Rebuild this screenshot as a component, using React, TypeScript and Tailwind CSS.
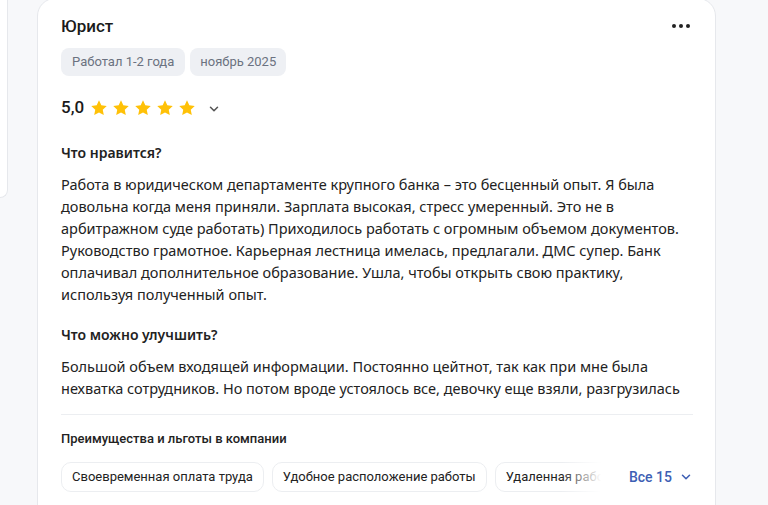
import React from "react";

const Star = () => (
  <svg width="18" height="18" viewBox="0 0 24 24" className="shrink-0">
    <path
      d="M12 1.8l3.1 6.6 7.2.9-5.3 5 1.4 7.1L12 17.9l-6.4 3.5 1.4-7.1-5.3-5 7.2-.9z"
      fill="#ffc107"
    />
  </svg>
);

const Chevron = ({ color = "#555", size = 14 }: { color?: string; size?: number }) => (
  <svg width={size} height={size} viewBox="0 0 24 24" fill="none">
    <path d="M6 9l6 6 6-6" stroke={color} strokeWidth="2.6" strokeLinecap="round" strokeLinejoin="round" />
  </svg>
);

export default function App() {
  const body = "font-['Noto_Sans','Open_Sans',sans-serif] text-[14.5px] leading-[22px] text-[#222]";
  const chip = "shrink-0 h-[30px] px-[10px] flex items-center rounded-[10px] border border-[#eceef1] text-[13px] text-[#222] whitespace-nowrap";
  return (
    <div className="w-[768px] h-[505px] overflow-hidden bg-[#f7f8fa] flex font-['Roboto',sans-serif]">
      <div className="w-[8px] h-[198px] bg-white border-r border-b border-[#e6e8ec] rounded-br-[14px] shrink-0" />
      <div className="ml-[29px] w-[679px] h-[530px] -mt-[2px] bg-white border border-[#e6e8ec] rounded-[18px] pl-[23px] pr-[22px] pt-[15px] flex flex-col">
        <div className="flex items-center justify-between">
          <div className="text-[17px] leading-[24px] font-medium text-[#1a1a1a]">Юрист</div>
          <div className="flex gap-[3px] mr-[3px]">
            <span className="w-[4px] h-[4px] rounded-full bg-[#222]" />
            <span className="w-[4px] h-[4px] rounded-full bg-[#222]" />
            <span className="w-[4px] h-[4px] rounded-full bg-[#222]" />
          </div>
        </div>
        <div className="flex gap-[5px] mt-[10px]">
          <span className="h-[28px] px-[11px] flex items-center rounded-[8px] bg-[#eef0f4] text-[13px] text-[#6b7280]">Работал 1-2 года</span>
          <span className="h-[28px] px-[10px] flex items-center rounded-[8px] bg-[#eef0f4] text-[13px] text-[#6b7280]">ноябрь 2025</span>
        </div>
        <div className="flex items-center mt-[20px] h-[24px]">
          <span className="text-[17px] font-medium text-[#1a1a1a] mr-[6px]">5,0</span>
          <div className="flex gap-[4px]">
            <Star /><Star /><Star /><Star /><Star />
          </div>
          <span className="ml-[11px] mt-[1px]"><Chevron /></span>
        </div>
        <div className="mt-[23px] font-['Noto_Sans','Open_Sans',sans-serif] text-[14px] leading-[20px] font-semibold text-[#222]">Что нравится?</div>
        <p className={`${body} mt-[10px] w-[632px]`}>
          Работа в юридическом департаменте крупного банка – это бесценный опыт. Я была довольна когда меня приняли. Зарплата высокая, стресс умеренный. Это не в арбитражном суде работать) Приходилось работать с огромным объемом документов. Руководство грамотное. Карьерная лестница имелась, предлагали. ДМС супер. Банк оплачивал дополнительное образование. Ушла, чтобы открыть свою практику, используя полученный опыт.
        </p>
        <div className="mt-[20px] font-['Noto_Sans','Open_Sans',sans-serif] text-[14px] leading-[20px] font-semibold text-[#222]">Что можно улучшить?</div>
        <p className={`${body} mt-[10px] w-[632px]`}>
          Большой объем входящей информации. Постоянно цейтнот, так как при мне была нехватка сотрудников. Но потом вроде устоялось все, девочку еще взяли, разгрузилась
        </p>
        <div className="mt-[15px] h-px bg-[#eceef1] w-[632px]" />
        <div className="mt-[15px] text-[13px] leading-[18px] font-medium text-[#222]">Преимущества и льготы в компании</div>
        <div className="mt-[14px] flex items-center w-[632px]">
          <div className="relative flex gap-[8px] w-[540px] overflow-hidden">
            <span className={chip}>Своевременная оплата труда</span>
            <span className={chip}>Удобное расположение работы</span>
            <span className={chip}>Удаленная работа</span>
            <div className="absolute right-0 top-0 h-full w-[40px] bg-gradient-to-r from-transparent to-white" />
          </div>
          <div className="ml-[28px] flex items-center gap-[7px] text-[14px] font-medium text-[#3e5fb4] whitespace-nowrap">
            <span>Все 15</span>
            <Chevron color="#3e5fb4" size={14} />
          </div>
        </div>
      </div>
    </div>
  );
}
